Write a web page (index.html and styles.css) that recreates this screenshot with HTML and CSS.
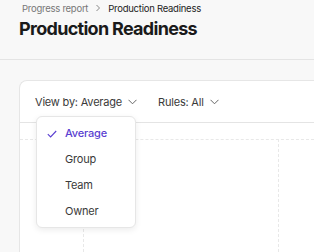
FILE: index.html
```html
<!DOCTYPE html>
<html lang="en">
<head>
    <meta charset="UTF-8">
    <meta name="viewport" content="width=device-width, initial-scale=1.0">
    <title>Production Readiness</title>
    <link rel="stylesheet" href="styles.css">
</head>
<body>
    <header class="page-header">
        <nav class="breadcrumb">
            <span class="crumb">Progress report</span>
            <svg class="crumb-sep" width="8" height="8" viewBox="0 0 8 8"><path d="M2.5 1 L5.5 4 L2.5 7" fill="none" stroke="#888" stroke-width="1"/></svg>
            <span class="crumb current">Production Readiness</span>
        </nav>
        <h1>Production Readiness</h1>
    </header>

    <main class="content">
        <section class="card">
            <div class="toolbar">
                <button class="filter">View by: Average
                    <svg width="9" height="6" viewBox="0 0 9 6"><path d="M0.5 0.8 L4.5 4.8 L8.5 0.8" fill="none" stroke="#666" stroke-width="1"/></svg>
                </button>
                <button class="filter">Rules: All
                    <svg width="9" height="6" viewBox="0 0 9 6"><path d="M0.5 0.8 L4.5 4.8 L8.5 0.8" fill="none" stroke="#666" stroke-width="1"/></svg>
                </button>
            </div>
            <div class="chart">
                <div class="grid-h"></div>
                <div class="grid-v v1"></div>
                <div class="grid-v v2"></div>
            </div>

            <ul class="menu">
                <li class="menu-item selected">
                    <svg class="check" width="10" height="8" viewBox="0 0 10 8"><path d="M0.8 4.2 L3.6 7 L9.2 1" fill="none" stroke="#5a3fd1" stroke-width="1.1"/></svg>
                    Average
                </li>
                <li class="menu-item">Group</li>
                <li class="menu-item">Team</li>
                <li class="menu-item">Owner</li>
            </ul>
        </section>
    </main>
</body>
</html>
```

FILE: styles.css
```css
body {
    margin: 0;
    font-family: Inter, "Noto Sans", sans-serif;
    background-color: #f8f8f8;
    color: #1c1c1c;
    overflow: hidden;
}
.page-header {
    height: 60px;
    padding: 0 19px;
    border-bottom: 1px solid #e4e4e4;
    box-sizing: border-box;
}
.breadcrumb {
    display: flex;
    align-items: center;
    gap: 5px;
    height: 16px;
    padding-left: 3px;
    font-size: 9.5px;
    letter-spacing: -0.25px;
}
.crumb {
    color: #777;
}
.crumb.current {
    color: #1c1c1c;
}
.crumb-sep {
    margin: 0 1px;
}
h1 {
    margin: 2px 0 0;
    font-size: 18px;
    font-weight: 700;
    letter-spacing: -0.7px;
    color: #1a1a1a;
}
.content {
    padding: 20px 0 0 19px;
}
.card {
    position: relative;
    height: 171px;
    background-color: #fff;
    border: 1px solid #e6e6e6;
    border-right: none;
    border-bottom: none;
    border-radius: 8px 0 0 0;
}
.toolbar {
    display: flex;
    align-items: center;
    gap: 21px;
    height: 41px;
    padding: 0 15px;
    border-bottom: 1px solid #e4e4e4;
}
.filter {
    display: flex;
    align-items: center;
    gap: 6px;
    padding: 0;
    border: none;
    background: none;
    font-family: inherit;
    font-size: 11px;
    letter-spacing: -0.2px;
    color: #3a3a3a;
}
.chart {
    position: relative;
    height: 129px;
}
.grid-h {
    position: absolute;
    left: 0;
    right: 0;
    top: 16px;
    border-top: 1px dashed #e8e8e8;
}
.grid-v {
    position: absolute;
    top: 16px;
    bottom: 0;
    border-left: 1px dashed #e8e8e8;
}
.grid-v.v1 {
    left: 63px;
}
.grid-v.v2 {
    left: 258px;
}
.menu {
    position: absolute;
    left: 16px;
    top: 35px;
    width: 100px;
    margin: 0;
    padding: 3px 0;
    list-style: none;
    background-color: #fff;
    border: 1px solid #e6e6e6;
    border-radius: 6px;
    box-shadow: 0 2px 6px rgba(0, 0, 0, 0.08);
    box-sizing: border-box;
}
.menu-item {
    position: relative;
    height: 26px;
    line-height: 26px;
    padding-left: 28px;
    font-size: 11px;
    letter-spacing: -0.2px;
    color: #3a3a3a;
}
.menu-item.selected {
    color: #5a3fd1;
    font-weight: 500;
}
.check {
    position: absolute;
    left: 10px;
    top: 10px;
}
```
